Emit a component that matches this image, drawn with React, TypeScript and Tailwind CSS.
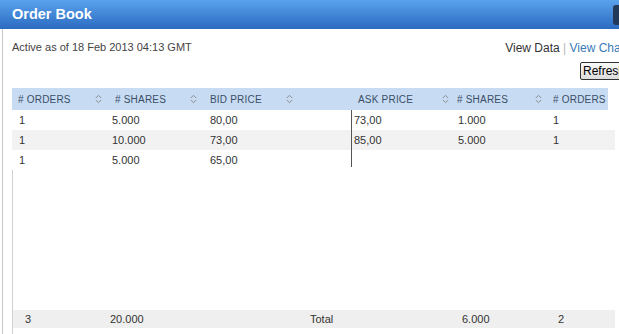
import React from "react";

function SortIcon() {
  return (
    <svg width="7" height="10" viewBox="0 0 7 10" className="shrink-0">
      <path d="M0.8 4 L3.5 1.3 L6.2 4" fill="none" stroke="#8e8e8e" strokeWidth="1" />
      <path d="M0.8 6 L3.5 8.7 L6.2 6" fill="none" stroke="#8e8e8e" strokeWidth="1" />
    </svg>
  );
}

const rows = [
  ["1", "5.000", "80,00", "73,00", "1.000", "1"],
  ["1", "10.000", "73,00", "85,00", "5.000", "1"],
  ["1", "5.000", "65,00", "", "", ""],
];

export default function App() {
  return (
    <div className="w-[619px] h-[334px] overflow-hidden bg-white font-['Liberation_Sans',Arial,sans-serif]">
      <div className="w-[640px] h-[334px] flex flex-col">
        <div className="relative h-[29px] shrink-0 bg-gradient-to-b from-[#5aa2ec] to-[#2b6bc1] flex items-center pl-[12px] text-white font-bold text-[14.5px]">
          Order Book
          <div className="absolute left-[613px] top-[5px] w-[14px] h-[20px] rounded-[3px] bg-[#22395c]" />
        </div>
        <div className="flex-1 ml-[2px] border-l border-[#c8c8c8] pl-[9px] pr-[12px] pt-[12px] flex flex-col">
          <div className="flex justify-between items-start">
            <div className="text-[11px] leading-[13px] text-[#444]">Active as of 18 Feb 2013 04:13 GMT</div>
            <div className="flex flex-col items-end">
              <div className="text-[12px] leading-[14px] text-[#333]">
                View Data <span className="text-[#b8b8b8]">|</span> <span className="text-[#3a7ab8]">View Chart</span>
              </div>
              <button className="mt-[7px] h-[18px] px-[2px] border border-[#333] rounded-[2px] bg-gradient-to-b from-[#fafafa] to-[#dcdcdc] text-[12px] leading-[14px] text-black">
                Refresh
              </button>
            </div>
          </div>
          <div className="mt-[8px] w-[603px] flex-1 flex flex-col">
            <div className="w-[596px] h-[22px] bg-[#c7dbf3] flex text-[10px] text-[#3a4e66] tracking-[0.2px]">
              <div className="w-[99px] pl-[6px] pr-[9px] flex items-center"><span>#&nbsp;ORDERS</span><span className="ml-auto"><SortIcon /></span></div>
              <div className="w-[95px] pl-[4px] pr-[9px] flex items-center"><span>#&nbsp;SHARES</span><span className="ml-auto"><SortIcon /></span></div>
              <div className="w-[145px] pl-[4px] pr-[58px] flex items-center"><span>BID PRICE</span><span className="ml-auto"><SortIcon /></span></div>
              <div className="w-[102px] pl-[7px] pr-[4px] flex items-center"><span>ASK PRICE</span><span className="ml-auto"><SortIcon /></span></div>
              <div className="w-[96px] pl-[4px] pr-[7px] flex items-center"><span>#&nbsp;SHARES</span><span className="ml-auto"><SortIcon /></span></div>
              <div className="w-[59px] pl-[4px] flex items-center"><span>#&nbsp;ORDERS</span></div>
            </div>
            {rows.map((r, i) => (
              <div key={i} className={`h-[20px] flex text-[11px] text-[#333] ${i === 1 ? "bg-[#f2f2f2]" : "bg-white"}`}>
                <div className="w-[99px] pl-[7px] flex items-center">{r[0]}</div>
                <div className="w-[95px] pl-[1px] flex items-center">{r[1]}</div>
                <div className="w-[145px] pl-[4px] flex items-center">{r[2]}</div>
                <div className={`w-[102px] pl-[2px] flex items-center border-l border-[#555] ${i === 2 ? "mb-[3px]" : ""}`}>{r[3]}</div>
                <div className="w-[96px] pl-[5px] flex items-center">{r[4]}</div>
                <div className="flex-1 pl-[4px] flex items-center">{r[5]}</div>
              </div>
            ))}
            <div className="flex-1 border-l border-[#d0d0d0] flex flex-col">
              <div className="flex-1" />
              <div className="h-[18px] bg-[#efefef] flex items-center text-[11px] text-[#333]">
                <div className="w-[97px] pl-[12px]">3</div>
                <div className="w-[200px]">20.000</div>
                <div className="w-[152px]">Total</div>
                <div className="w-[96px]">6.000</div>
                <div>2</div>
              </div>
              <div className="h-[6px]" />
            </div>
          </div>
        </div>
      </div>
    </div>
  );
}
